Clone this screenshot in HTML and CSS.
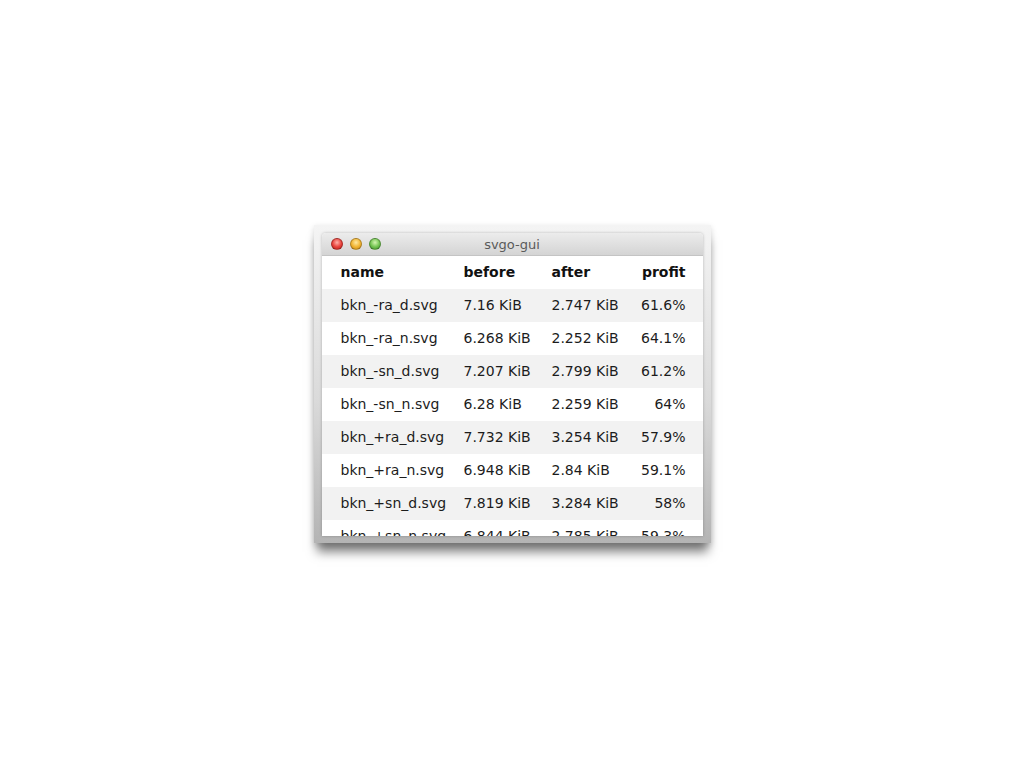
FILE: index.html
```html
<!DOCTYPE html>
<html lang="en">
<head>
  <meta charset="UTF-8">
  <title>svgo-gui</title>
  <link rel="stylesheet" href="styles.css">
</head>
<body>
  <div class="frame">
    <div class="window">
      <div class="titlebar">
        <div class="lights">
          <span class="light red"></span>
          <span class="light yellow"></span>
          <span class="light green"></span>
        </div>
        <div class="title">svgo-gui</div>
      </div>
      <div class="content">
        <div class="row head">
          <span>name</span><span>before</span><span>after</span><span class="profit">profit</span>
        </div>
        <div class="row odd">
          <span>bkn_-ra_d.svg</span><span>7.16 KiB</span><span>2.747 KiB</span><span class="profit">61.6%</span>
        </div>
        <div class="row">
          <span>bkn_-ra_n.svg</span><span>6.268 KiB</span><span>2.252 KiB</span><span class="profit">64.1%</span>
        </div>
        <div class="row odd">
          <span>bkn_-sn_d.svg</span><span>7.207 KiB</span><span>2.799 KiB</span><span class="profit">61.2%</span>
        </div>
        <div class="row">
          <span>bkn_-sn_n.svg</span><span>6.28 KiB</span><span>2.259 KiB</span><span class="profit">64%</span>
        </div>
        <div class="row odd">
          <span>bkn_+ra_d.svg</span><span>7.732 KiB</span><span>3.254 KiB</span><span class="profit">57.9%</span>
        </div>
        <div class="row">
          <span>bkn_+ra_n.svg</span><span>6.948 KiB</span><span>2.84 KiB</span><span class="profit">59.1%</span>
        </div>
        <div class="row odd">
          <span>bkn_+sn_d.svg</span><span>7.819 KiB</span><span>3.284 KiB</span><span class="profit">58%</span>
        </div>
        <div class="row">
          <span>bkn_+sn_n.svg</span><span>6.844 KiB</span><span>2.785 KiB</span><span class="profit">59.3%</span>
        </div>
      </div>
    </div>
  </div>
</body>
</html>
```

FILE: styles.css
```css
html, body {
  height: 100%;
}
body {
  margin: 0;
  background-color: #fff;
  font-family: "DejaVu Sans", "Liberation Sans", sans-serif;
  overflow: hidden;
}
.frame {
  width: 381px;
  margin: 225px auto 0;
  padding: 8px 8px 7px 8px;
  background: linear-gradient(#f4f4f4, #dadada 55%, #b4b4b4);
  box-shadow: 0 12px 10px -3px rgba(0, 0, 0, 0.5), 0 2px 6px rgba(0, 0, 0, 0.15);
}
.window {
  background-color: #fff;
  border-radius: 4px 4px 0 0;
  overflow: hidden;
  box-shadow: 0 0 3px rgba(0, 0, 0, 0.25);
}
.titlebar {
  position: relative;
  height: 23px;
  background: linear-gradient(#ececec, #d4d4d4);
  border-bottom: 1px solid #c4c4c4;
  box-sizing: border-box;
}
.lights {
  display: flex;
  gap: 7px;
  padding: 5px 0 0 9px;
}
.light {
  width: 12px;
  height: 12px;
  border-radius: 50%;
  box-sizing: border-box;
  border: 1px solid rgba(0, 0, 0, 0.25);
}
.red {
  background: radial-gradient(circle at 50% 35%, #ffb0a8, #e8403a 55%, #b3241e);
}
.yellow {
  background: radial-gradient(circle at 50% 35%, #ffe9a0, #f0b330 55%, #c4861a);
}
.green {
  background: radial-gradient(circle at 50% 35%, #d4f5b0, #72c350 55%, #3f8f2a);
}
.title {
  position: absolute;
  top: 0;
  left: 0;
  right: 0;
  line-height: 23px;
  text-align: center;
  font-size: 13px;
  color: #5a5a5a;
}
.content {
  height: 280px;
  overflow: hidden;
}
.row {
  display: grid;
  grid-template-columns: 123px 88px 1fr auto;
  height: 33px;
  line-height: 33px;
  padding: 0 17px 0 19px;
  font-size: 14px;
  color: #1c1c1c;
}
.row.odd {
  background-color: #f2f2f2;
}
.row.head {
  font-weight: bold;
  color: #111;
}
.profit {
  text-align: right;
}
```
